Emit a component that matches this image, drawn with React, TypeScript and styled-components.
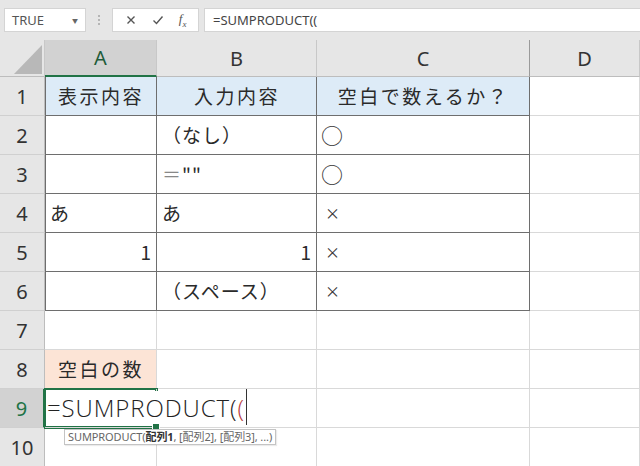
import React from 'react';
import styled, { createGlobalStyle, css } from 'styled-components';

const GREEN = '#217346';
const GRID = '#d9d9d9';
const DARK = '#6e6e6e';

const GlobalStyle = createGlobalStyle`
  html, body { margin: 0; padding: 0; background: #fff; }
  body { font-family: "Noto Sans", "Noto Sans CJK JP", sans-serif; overflow: hidden; }
`;

const Window = styled.div`
  width: 640px;
  height: 466px;
  overflow: hidden;
  display: flex;
  flex-direction: column;
`;

const Toolbar = styled.div`
  height: 40px;
  flex: none;
  box-sizing: border-box;
  background: #e6e6e6;
  display: flex;
  align-items: flex-start;
  padding: 8px 0 0 4px;
`;

const NameBox = styled.div`
  width: 82px;
  height: 24px;
  box-sizing: border-box;
  background: #fff;
  border: 1px solid #d4d4d4;
  display: flex;
  align-items: center;
  justify-content: space-between;
  padding: 0 7px 0 7px;
  font-size: 13px;
  color: #555;
`;

const Caret = styled.span`
  font-size: 6px;
  color: #666;
`;

const Grip = styled.div`
  width: 26px;
  height: 24px;
  display: flex;
  flex-direction: column;
  align-items: center;
  justify-content: center;
  gap: 2px;
  span {
    width: 2px;
    height: 2px;
    background: #b5b5b5;
  }
`;

const ButtonBox = styled.div`
  width: 87px;
  height: 24px;
  box-sizing: border-box;
  background: #fff;
  border: 1px solid #d4d4d4;
  display: flex;
  align-items: center;
  justify-content: space-around;
  padding: 0 4px;
`;

const Fx = styled.span`
  font-family: "Liberation Serif", serif;
  font-style: italic;
  font-size: 13px;
  color: #555;
  sub { font-size: 9px; }
`;

const FormulaInput = styled.div`
  flex: 1;
  margin-left: 5px;
  height: 24px;
  box-sizing: border-box;
  background: #fff;
  border: 1px solid #d4d4d4;
  border-right: none;
  display: flex;
  align-items: center;
  padding-left: 8px;
  font-size: 13px;
  color: #444;
`;

const Sheet = styled.div`
  display: grid;
  grid-template-columns: 45px 112px 160px 213px 110px;
  grid-template-rows: 37px;
  grid-auto-rows: 39px;
`;

const Corner = styled.div`
  background: #e6e6e6;
  border-right: 1px solid #c8c8c8;
  border-bottom: 1px solid #bdbdbd;
  box-sizing: border-box;
  display: flex;
  align-items: flex-end;
  justify-content: flex-end;
  padding: 0 2px 2px 0;
`;

const ColHead = styled.div<{ $active?: boolean; $dark?: boolean }>`
  box-sizing: border-box;
  background: ${p => (p.$active ? '#d2d2d2' : '#e6e6e6')};
  border-right: 1px solid ${p => (p.$dark ? '#9a9a9a' : '#c8c8c8')};
  border-bottom: ${p => (p.$active ? `2px solid ${GREEN}` : '1px solid #bdbdbd')};
  display: flex;
  align-items: center;
  justify-content: center;
  font-size: 20px;
  color: ${p => (p.$active ? '#1f5c3a' : '#333')};
`;

const RowHead = styled.div<{ $active?: boolean }>`
  box-sizing: border-box;
  background: ${p => (p.$active ? '#d2d2d2' : '#e6e6e6')};
  border-right: ${p => (p.$active ? `2px solid ${GREEN}` : '1px solid #bdbdbd')};
  border-bottom: 1px solid #d0d0d0;
  display: flex;
  align-items: center;
  justify-content: center;
  font-size: 20px;
  color: ${p => (p.$active ? GREEN : '#333')};
`;

interface CellProps {
  $fill?: string;
  $align?: 'left' | 'center' | 'right';
  $dark?: boolean;
  $leftEdge?: boolean;
}

const Cell = styled.div<CellProps>`
  position: relative;
  box-sizing: border-box;
  background: ${p => p.$fill || '#fff'};
  border-right: 1px solid ${p => (p.$dark ? DARK : GRID)};
  border-bottom: 1px solid ${p => (p.$dark ? DARK : GRID)};
  ${p => p.$leftEdge && css`box-shadow: inset 1px 0 0 ${DARK};`}
  display: flex;
  align-items: center;
  justify-content: ${p => (p.$align === 'center' ? 'center' : p.$align === 'right' ? 'flex-end' : 'flex-start')};
  padding: 0 4px 2px 5px;
  font-family: "Noto Sans CJK JP", sans-serif;
  font-size: 19px;
  letter-spacing: ${p => (p.$align === 'center' ? '2.5px' : '1px')};
  color: #2a2a2a;
  white-space: nowrap;
`;

const EditCell = styled(Cell)`
  box-shadow: 0 0 0 1px ${GREEN}, inset 0 0 0 1px ${GREEN};
  z-index: 2;
`;

const Editor = styled.div`
  position: absolute;
  left: 2px;
  top: 2px;
  bottom: 2px;
  width: 202px;
  background: #fff;
  display: flex;
  align-items: center;
  padding-bottom: 2px;
  box-sizing: border-box;
  font-family: "Open Sans", "Noto Sans", sans-serif;
  font-weight: 300;
  font-size: 24px;
  letter-spacing: 0.9px;
  color: #222;
`;

const Paren = styled.span<{ $red?: boolean }>`
  color: ${p => (p.$red ? '#b83c3c' : 'inherit')};
`;

const TextCaret = styled.span`
  display: inline-block;
  width: 1px;
  height: 36px;
  margin-left: 1px;
  background: #333;
`;

const Handle = styled.div`
  position: absolute;
  right: -4px;
  bottom: -4px;
  width: 6px;
  height: 6px;
  background: ${GREEN};
  border: 1px solid #fff;
  z-index: 3;
`;

const Tip = styled.div`
  position: absolute;
  left: 19px;
  top: 40px;
  height: 16px;
  padding: 0 3px;
  box-sizing: border-box;
  background: #fff;
  border: 1px solid #c4c4c4;
  box-shadow: 1px 1px 1px rgba(0, 0, 0, 0.08);
  font-family: "Noto Sans", "Noto Sans CJK JP", sans-serif;
  font-size: 11px;
  line-height: 14px;
  color: #666;
  letter-spacing: -0.1px;
  white-space: nowrap;
  z-index: 4;
  b { color: #333; }
`;

const Mark = styled.span<{ $cross?: boolean }>`
  font-family: "Noto Sans CJK JP", sans-serif;
  font-size: ${p => (p.$cross ? '15px' : '22px')};
  line-height: 1;
  padding-left: ${p => (p.$cross ? '3px' : '0')};
  margin-left: ${p => (p.$cross ? '0' : '-1px')};
  letter-spacing: 0;
  color: #333;
`;

const Light = styled.span`
  color: #888;
`;

const Icon = ({ d }: { d: string }) => (
  <svg width="12" height="12" viewBox="0 0 12 12" fill="none" stroke="#555" strokeWidth="1.4">
    <path d={d} />
  </svg>
);

type Align = 'left' | 'center' | 'right';
type Row = { a?: React.ReactNode; b?: React.ReactNode; c?: React.ReactNode; aAlign?: Align; bAlign?: Align; cAlign?: Align; fill?: string };

const rows: Row[] = [
  { a: '表示内容', b: '入力内容', c: '空白で数えるか？', aAlign: 'center', bAlign: 'center', cAlign: 'center', fill: '#ddebf7' },
  { b: '（なし）', c: <Mark>○</Mark> },
  { b: <><Light>＝</Light>""</>, c: <Mark>○</Mark> },
  { a: 'あ', b: 'あ', c: <Mark $cross>×</Mark> },
  { a: '1', b: '1', aAlign: 'right', bAlign: 'right', c: <Mark $cross>×</Mark> },
  { b: '（スペース）', c: <Mark $cross>×</Mark> },
];

export default function App() {
  return (
    <Window>
      <GlobalStyle />
      <Toolbar>
        <NameBox>
          TRUE
          <Caret>▼</Caret>
        </NameBox>
        <Grip>
          <span />
          <span />
          <span />
        </Grip>
        <ButtonBox>
          <Icon d="M2.5 2.5 L9.5 9.5 M9.5 2.5 L2.5 9.5" />
          <Icon d="M1.5 6.5 L4.5 9.5 L10.5 2.5" />
          <Fx>
            f<sub>x</sub>
          </Fx>
        </ButtonBox>
        <FormulaInput>=SUMPRODUCT((</FormulaInput>
      </Toolbar>
      <Sheet>
        <Corner>
          <svg width="28" height="29" viewBox="0 0 28 29">
            <polygon points="28,0 28,29 0,29" fill="#b8b8b8" />
          </svg>
        </Corner>
        <ColHead $active>A</ColHead>
        <ColHead>B</ColHead>
        <ColHead $dark>C</ColHead>
        <ColHead>D</ColHead>

        {rows.map((r, i) => (
          <React.Fragment key={i}>
            <RowHead>{i + 1}</RowHead>
            <Cell $dark $leftEdge $fill={r.fill} $align={r.aAlign || 'left'}>{r.a}</Cell>
            <Cell $dark $fill={r.fill} $align={r.bAlign || 'left'}>{r.b}</Cell>
            <Cell $dark $fill={r.fill} $align={r.cAlign || 'left'}>{r.c}</Cell>
            <Cell />
          </React.Fragment>
        ))}

        <RowHead>7</RowHead>
        <Cell />
        <Cell />
        <Cell />
        <Cell />

        <RowHead>8</RowHead>
        <Cell $fill="#fce4d6" $align="center">空白の数</Cell>
        <Cell />
        <Cell />
        <Cell />

        <RowHead $active>9</RowHead>
        <EditCell>
          <Editor>
            =SUMPRODUCT(<Paren $red>(</Paren>
            <TextCaret />
          </Editor>
          <Handle />
          <Tip>
            SUMPRODUCT(<b>配列1</b>, [配列2], [配列3], ...)
          </Tip>
        </EditCell>
        <Cell />
        <Cell />
        <Cell />

        <RowHead>10</RowHead>
        <Cell />
        <Cell />
        <Cell />
        <Cell />
      </Sheet>
    </Window>
  );
}
